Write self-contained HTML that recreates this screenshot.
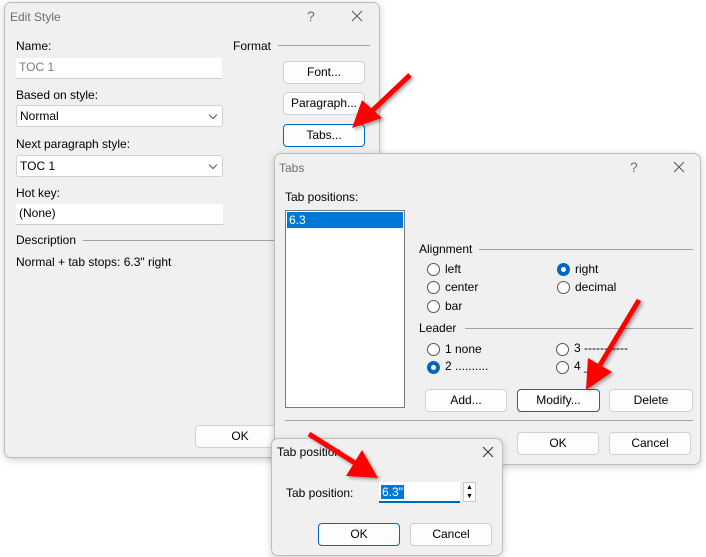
<!DOCTYPE html>
<html><head><style>
*{box-sizing:border-box;margin:0;padding:0}
body{width:706px;height:557px;background:#fff;position:relative;overflow:hidden;font-family:"Liberation Sans",sans-serif;font-size:12px;color:#000}
.dlg{position:absolute;background:#f0f0f0;border:1px solid #bdbdbd;border-radius:7px;box-shadow:0 2px 8px rgba(0,0,0,.2)}
.a{position:absolute;white-space:nowrap}
.t{color:#6e6e6e}
.in{position:absolute;background:#fff;border-bottom:1px solid #ccc;padding:2px 3px;height:21px}
.sel{position:absolute;background:#fff;border:1px solid #d0d0d0;border-radius:3px;padding:3px 3px;height:22px}
.sel:after{content:"";position:absolute;right:6px;top:6px;width:5px;height:5px;border-right:1px solid #555;border-bottom:1px solid #555;transform:rotate(45deg)}
.btn{position:absolute;background:#fdfdfd;border:1px solid #d0d0d0;border-radius:4px;text-align:center;line-height:20px;height:23px}
.btn.p{border:1px solid #0067c0}
.ln{position:absolute;height:1px;background:#a0a0a0}
.r{position:absolute;width:13px;height:13px;border:1px solid #555;border-radius:50%;background:#fff}
.r.on{border:4px solid #0067c0;background:#fff}
.x{position:absolute;width:12px;height:12px}
</style></head><body>

<div class="dlg" style="left:4px;top:2px;width:376px;height:456px">
 <div class="a t" style="left:5px;top:7px">Edit Style</div>
 <div class="a t" style="left:302px;top:5px;font-size:14px">?</div>
 <svg class="x" style="left:346px;top:7px" viewBox="0 0 12 12"><path d="M1 1L11 11M11 1L1 11" stroke="#555" stroke-width="1"/></svg>
 <div class="a" style="left:11px;top:36px">Name:</div>
 <div class="in" style="left:11px;top:55px;width:206px;color:#7a7a7a">TOC 1</div>
 <div class="a" style="left:11px;top:85px">Based on style:</div>
 <div class="sel" style="left:11px;top:102px;width:207px">Normal</div>
 <div class="a" style="left:11px;top:134px">Next paragraph style:</div>
 <div class="sel" style="left:11px;top:152px;width:207px">TOC 1</div>
 <div class="a" style="left:11px;top:183px">Hot key:</div>
 <div class="in" style="left:11px;top:201px;width:207px">(None)</div>
 <div class="a" style="left:11px;top:230px">Description</div>
 <div class="ln" style="left:78px;top:237px;width:200px"></div>
 <div class="a" style="left:11px;top:252px">Normal + tab stops: 6.3" right</div>
 <div class="a" style="left:228px;top:36px">Format</div>
 <div class="ln" style="left:273px;top:42px;width:92px"></div>
 <div class="btn" style="left:278px;top:58px;width:82px">Font...</div>
 <div class="btn" style="left:278px;top:89px;width:82px">Paragraph...</div>
 <div class="btn p" style="left:278px;top:121px;width:82px">Tabs...</div>
 <div class="btn" style="left:190px;top:422px;width:90px">OK</div>
</div>

<div class="dlg" style="left:274px;top:153px;width:427px;height:312px">
 <div class="a t" style="left:4px;top:7px">Tabs</div>
 <div class="a t" style="left:355px;top:5px;font-size:14px">?</div>
 <svg class="x" style="left:398px;top:7px" viewBox="0 0 12 12"><path d="M1 1L11 11M11 1L1 11" stroke="#555" stroke-width="1"/></svg>
 <div class="a" style="left:10px;top:36px">Tab positions:</div>
 <div style="position:absolute;left:10px;top:56px;width:120px;height:198px;background:#fff;border:1px solid #7a7a7a">
  <div style="margin:1px;height:16px;background:#0078d7;color:#fff;padding:1px 2px">6.3</div>
 </div>
 <div class="a" style="left:144px;top:88px">Alignment</div>
 <div class="ln" style="left:204px;top:95px;width:214px"></div>
 <div class="r" style="left:152px;top:109px"></div><div class="a" style="left:170px;top:108px">left</div>
 <div class="r on" style="left:282px;top:109px"></div><div class="a" style="left:300px;top:108px">right</div>
 <div class="r" style="left:152px;top:127px"></div><div class="a" style="left:170px;top:126px">center</div>
 <div class="r" style="left:282px;top:127px"></div><div class="a" style="left:300px;top:126px">decimal</div>
 <div class="r" style="left:152px;top:146px"></div><div class="a" style="left:170px;top:145px">bar</div>
 <div class="a" style="left:144px;top:167px">Leader</div>
 <div class="ln" style="left:190px;top:174px;width:228px"></div>
 <div class="r" style="left:152px;top:189px"></div><div class="a" style="left:170px;top:188px">1 none</div>
 <div class="r" style="left:281px;top:189px"></div><div class="a" style="left:299px;top:187px">3 -----------</div>
 <div class="r on" style="left:152px;top:207px"></div><div class="a" style="left:170px;top:205px">2 ..........</div>
 <div class="r" style="left:281px;top:207px"></div><div class="a" style="left:299px;top:205px">4 ___</div>
 <div class="btn" style="left:150px;top:235px;width:82px">Add...</div>
 <div class="btn p" style="left:242px;top:235px;width:83px">Modify...</div>
 <div class="btn" style="left:334px;top:235px;width:84px">Delete</div>
 <div class="ln" style="left:10px;top:266px;width:408px"></div>
 <div class="btn" style="left:242px;top:278px;width:82px">OK</div>
 <div class="btn" style="left:334px;top:278px;width:82px">Cancel</div>
</div>

<div class="dlg" style="left:271px;top:438px;width:232px;height:118px">
 <div class="a" style="left:5px;top:6px;font-size:12px">Tab position</div>
 <svg class="x" style="left:210px;top:7px" viewBox="0 0 12 12"><path d="M1 1L11 11M11 1L1 11" stroke="#333" stroke-width="1.1"/></svg>
 <div class="a" style="left:14px;top:47px">Tab position:</div>
 <div style="position:absolute;left:107px;top:43px;width:81px;height:21px;background:#fff;border-bottom:2px solid #0067c0"><span style="position:absolute;left:2px;top:3px;background:#0078d7;color:#fff;padding:0 1px">6.3"</span></div>
 <div style="position:absolute;left:191px;top:43px;width:13px;height:20px;background:#fff;border:1px solid #ccc;font-size:7px;line-height:9px;text-align:center">▲<br>▼</div>
 <div class="btn p" style="left:46px;top:84px;width:82px">OK</div>
 <div class="btn" style="left:138px;top:84px;width:82px">Cancel</div>
</div>

<svg width="706" height="557" style="position:absolute;left:0;top:0" viewBox="0 0 706 557">
 <defs><filter id="s"><feDropShadow dx="2" dy="2" stdDeviation="1.5" flood-opacity=".35"/></filter></defs>
 <g fill="#f00" stroke="#f00" filter="url(#s)">
  <line x1="410" y1="75" x2="372" y2="111" stroke-width="5"/>
  <polygon points="352,128 362,100 382,118" stroke="none"/>
  <line x1="639" y1="300" x2="600" y2="365" stroke-width="5"/>
  <polygon points="586,390 588,358 612,372" stroke="none"/>
  <line x1="309" y1="434" x2="355" y2="463" stroke-width="5"/>
  <polygon points="378,478 346,476 362,450" stroke="none"/>
 </g>
</svg>
</body></html>
